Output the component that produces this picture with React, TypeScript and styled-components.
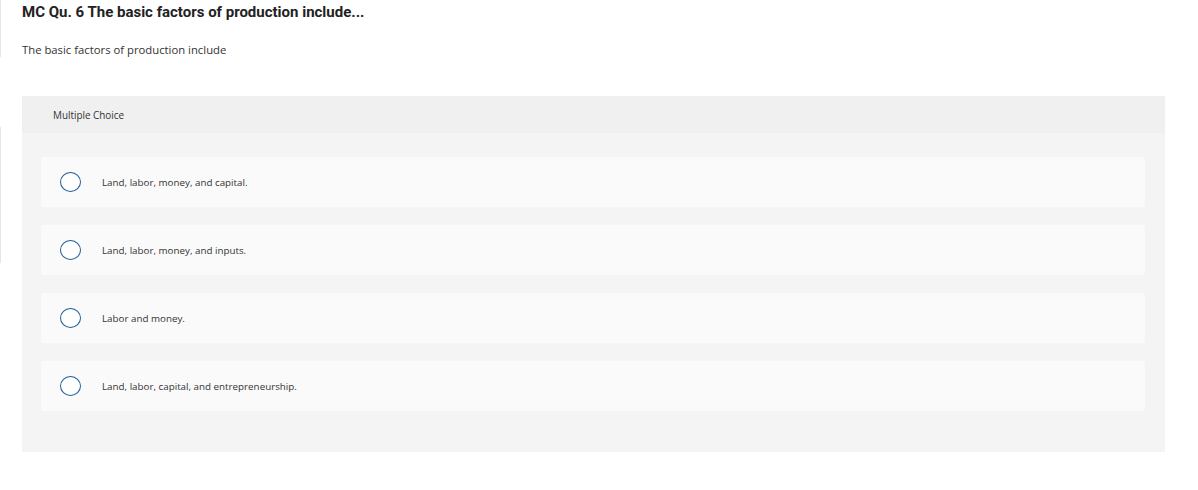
import React from 'react';
import styled, { createGlobalStyle } from 'styled-components';

const GlobalStyle = createGlobalStyle`
  html, body {
    margin: 0;
    padding: 0;
    background: #ffffff;
  }
  body {
    font-family: 'Open Sans', 'Liberation Sans', sans-serif;
    color: #222222;
  }
`;

const Page = styled.div`
  display: flex;
  width: 1198px;
  min-height: 490px;
`;

const Rail = styled.div`
  width: 1px;
  display: flex;
  flex-direction: column;
`;

const RailSegment = styled.div<{ $top: number; $height: number }>`
  margin-top: ${(p) => p.$top}px;
  height: ${(p) => p.$height}px;
  border-left: 1px solid #e6e6e6;
`;

const Content = styled.div`
  flex: 1;
  padding: 3px 32px 0 21px;
`;

const Title = styled.h1`
  margin: 0;
  font-family: Roboto, 'Liberation Sans', sans-serif;
  font-size: 15px;
  line-height: 18px;
  font-weight: 700;
  color: #222222;
`;

const Prompt = styled.p`
  margin: 22px 0 0;
  font-size: 11.3px;
  line-height: 14px;
  color: #333333;
`;

const Panel = styled.section`
  margin-top: 39px;
  width: 1143px;
  background: #f4f4f4;
  padding-bottom: 41px;
`;

const PanelHeader = styled.div`
  height: 37px;
  background: #f0f0f0;
  display: flex;
  align-items: center;
  padding-left: 31px;
  font-size: 9.9px;
  color: #333333;
`;

const Options = styled.div`
  display: flex;
  flex-direction: column;
  gap: 18px;
  padding: 24px 20px 0 19px;
`;

const Option = styled.label`
  height: 50px;
  background: #fafafa;
  border-radius: 2px;
  display: flex;
  align-items: center;
  padding-left: 19px;
  cursor: pointer;
`;

const Radio = styled.span`
  width: 19px;
  height: 18px;
  border: 1.5px solid #1f5d9c;
  border-radius: 50%;
  background: #ffffff;
  flex-shrink: 0;
`;

const OptionText = styled.span`
  margin-left: 21px;
  font-size: 9.8px;
  color: #333333;
`;

const choices = [
  'Land, labor, money, and capital.',
  'Land, labor, money, and inputs.',
  'Labor and money.',
  'Land, labor, capital, and entrepreneurship.',
];

const App: React.FC = () => {
  return (
    <>
      <GlobalStyle />
      <Page>
        <Rail>
          <RailSegment $top={0} $height={57} />
          <RailSegment $top={70} $height={136} />
        </Rail>
        <Content>
          <Title>MC Qu. 6 The basic factors of production include...</Title>
          <Prompt>The basic factors of production include</Prompt>
          <Panel>
            <PanelHeader>Multiple Choice</PanelHeader>
            <Options>
              {choices.map((c) => (
                <Option key={c}>
                  <Radio />
                  <OptionText>{c}</OptionText>
                </Option>
              ))}
            </Options>
          </Panel>
        </Content>
      </Page>
    </>
  );
};

export default App;
